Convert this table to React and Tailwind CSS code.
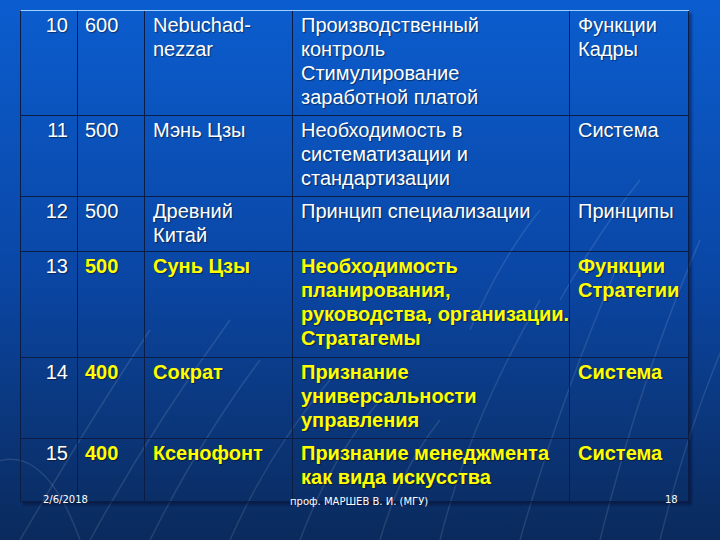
import React from "react";

const rows = [
  {
    h: "h-[105px]",
    hl: false,
    cells: ["10", "600", "Nebuchad-\nnezzar", "Производственный\nконтроль\nСтимулирование\nзаработной платой", "Функции\nКадры"],
  },
  {
    h: "h-[81px]",
    hl: false,
    cells: ["11", "500", "Мэнь Цзы", "Необходимость в\nсистематизации и\nстандартизации", "Система"],
  },
  {
    h: "h-[55px]",
    hl: false,
    cells: ["12", "500", "Древний\nКитай", "Принцип специализации", "Принципы"],
  },
  {
    h: "h-[106px]",
    hl: true,
    cells: ["13", "500", "Сунь Цзы", "Необходимость\nпланирования,\nруководства, организации.\nСтратагемы", "Функции\nСтратегии"],
  },
  {
    h: "h-[81px]",
    hl: true,
    cells: ["14", "400", "Сократ", "Признание\nуниверсальности\nуправления", "Система"],
  },
  {
    h: "h-[63px]",
    hl: true,
    cells: ["15", "400", "Ксенофонт", "Признание менеджмента\nкак вида искусства", "Система"],
  },
];

const widths = ["w-[57px]", "w-[67px]", "w-[148px]", "w-[277px]", "w-[119px]"];
const pads = ["pr-[9px] text-right", "pl-[7px]", "pl-[8px]", "pl-[8px]", "pl-[8px]"];

function Curves() {
  // faint swooshes in the slide background
  const paths = [
    "M-20 470 Q 40 430 80 540",
    "M20 540 Q 90 420 150 330",
    "M90 540 Q 150 430 230 320",
    "M150 540 Q 200 440 260 360",
    "M230 540 Q 270 450 330 380",
    "M300 540 Q 330 460 380 400",
    "M380 540 Q 400 470 440 420",
    "M440 540 Q 470 420 540 300",
    "M520 540 Q 560 400 620 260",
    "M600 540 Q 640 380 700 240",
    "M660 540 Q 690 420 730 330",
    "M560 300 Q 600 230 640 180",
    "M470 330 Q 500 260 540 210",
  ];
  return (
    <svg className="absolute inset-0" width="720" height="540" viewBox="0 0 720 540">
      {paths.map((d, i) => (
        <path key={i} d={d} fill="none" stroke="#ffffff" strokeOpacity="0.11" strokeWidth="1.5" />
      ))}
    </svg>
  );
}

export default function App() {
  return (
    <div className="relative w-[720px] h-[540px] overflow-hidden bg-linear-to-b from-[#0b5dcf] via-[#0a47a6] to-[#0a2a5c] font-['Liberation_Sans',Arial,sans-serif]">
      <Curves />

      <div className="relative pt-[10px] pl-[20px]">
        <div className="w-[669px] border-l border-t border-l-[#0b1d45] border-t-[#9fd0ff] shadow-[3px_3px_2px_rgba(0,0,30,0.35)]">
          {rows.map((r, ri) => (
            <div key={ri} className={`flex ${r.h}`}>
              {r.cells.map((c, ci) => {
                const first = ci === 0;
                const color = r.hl && !first ? "text-[#ffff00] font-bold" : "text-white";
                return (
                  <div
                    key={ci}
                    className={`${widths[ci]} ${pads[ci]} shrink-0 border-r border-b border-[#0b1d45] pt-[2px] text-[20px] leading-[24px] whitespace-pre [text-shadow:1px_1px_1px_rgba(0,0,0,0.45)] ${color}`}
                  >
                    {c}
                  </div>
                );
              })}
            </div>
          ))}
        </div>
      </div>

      {/* footer sits over the table's lower edge */}
      <div className="absolute left-0 top-[494px] w-full flex pl-[43px] text-[10px] leading-[12px] text-white font-['DejaVu_Sans',sans-serif]">
        <span className="w-[247px]">2/6/2018</span>
        <span className="w-[375px] pt-[2px]">проф. МАРШЕВ В. И. (МГУ)</span>
        <span>18</span>
      </div>
    </div>
  );
}
